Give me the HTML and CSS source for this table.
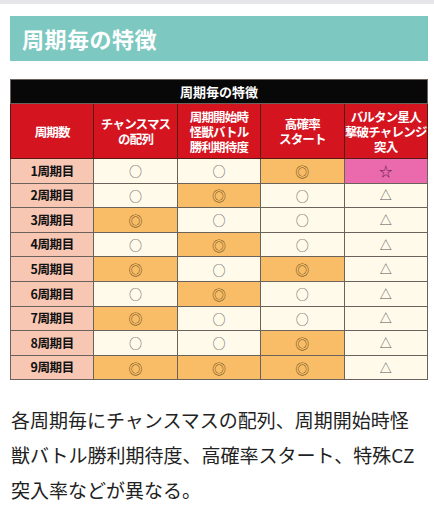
FILE: index.html
```html
<!DOCTYPE html>
<html lang="ja">
  <head>
    <meta charset="UTF-8" />
    <meta name="viewport" content="width=device-width, initial-scale=1.0" />
    <title>周期毎の特徴</title>
    <link rel="stylesheet" href="styles.css">
  </head>

  <body>
    <div class="top-line"></div>

    <h2 class="section-title">周期毎の特徴</h2>

    <table class="cycle-table">
      <tr>
        <th class="caption" colspan="5">周期毎の特徴</th>
      </tr>
      <tr class="head">
        <th class="c-num">周期数</th>
        <th class="c-col">チャンスマス<br>の配列</th>
        <th class="c-col">周期開始時<br>怪獣バトル<br>勝利期待度</th>
        <th class="c-col">高確率<br>スタート</th>
        <th class="c-col">バルタン星人<br>撃破チャレンジ<br>突入</th>
      </tr>
      <tr>
        <td class="label">1周期目</td>
        <td class="cream maru">○</td>
        <td class="cream maru">○</td>
        <td class="orange nijyu">◎</td>
        <td class="pink star">☆</td>
      </tr>
      <tr>
        <td class="label">2周期目</td>
        <td class="cream maru">○</td>
        <td class="orange nijyu">◎</td>
        <td class="cream maru">○</td>
        <td class="cream tri">△</td>
      </tr>
      <tr>
        <td class="label">3周期目</td>
        <td class="orange nijyu">◎</td>
        <td class="cream maru">○</td>
        <td class="cream maru">○</td>
        <td class="cream tri">△</td>
      </tr>
      <tr>
        <td class="label">4周期目</td>
        <td class="cream maru">○</td>
        <td class="orange nijyu">◎</td>
        <td class="cream maru">○</td>
        <td class="cream tri">△</td>
      </tr>
      <tr>
        <td class="label">5周期目</td>
        <td class="orange nijyu">◎</td>
        <td class="cream maru">○</td>
        <td class="orange nijyu">◎</td>
        <td class="cream tri">△</td>
      </tr>
      <tr>
        <td class="label">6周期目</td>
        <td class="cream maru">○</td>
        <td class="orange nijyu">◎</td>
        <td class="cream maru">○</td>
        <td class="cream tri">△</td>
      </tr>
      <tr>
        <td class="label">7周期目</td>
        <td class="orange nijyu">◎</td>
        <td class="cream maru">○</td>
        <td class="cream maru">○</td>
        <td class="cream tri">△</td>
      </tr>
      <tr>
        <td class="label">8周期目</td>
        <td class="cream maru">○</td>
        <td class="cream maru">○</td>
        <td class="orange nijyu">◎</td>
        <td class="cream tri">△</td>
      </tr>
      <tr>
        <td class="label">9周期目</td>
        <td class="orange nijyu">◎</td>
        <td class="orange nijyu">◎</td>
        <td class="orange nijyu">◎</td>
        <td class="cream tri">△</td>
      </tr>
    </table>

    <p class="note">各周期毎にチャンスマスの配列、周期開始時怪獣バトル勝利期待度、高確率スタート、特殊CZ突入率などが異なる。</p>
  </body>
</html>
```

FILE: styles.css
```css
/* General Reset */
* {
  margin: 0;
  padding: 0;
  box-sizing: border-box;
}

body {
  background: #ffffff;
  color: #222222;
  font-family: "Noto Sans CJK JP", "Noto Sans", sans-serif;
}

.top-line {
  height: 4px;
  background: #e6e5ea;
}

.section-title {
  margin: 12px 6px 0 10px;
  height: 45px;
  padding: 0 12px;
  background: #7dc8c0;
  color: #ffffff;
  font-size: 22px;
  font-weight: 700;
  line-height: 45px;
  letter-spacing: 0.5px;
}

/* Table */
.cycle-table {
  margin: 18px 0 0 10px;
  width: 418px;
  border-collapse: collapse;
  table-layout: fixed;
  border: 1px solid #3a3330;
}

.cycle-table th,
.cycle-table td {
  border: 1px solid #6c625c;
  text-align: center;
  vertical-align: middle;
  padding: 0;
  white-space: nowrap;
}

.caption {
  height: 24px;
  background: #080808;
  color: #ffffff;
  font-size: 13px;
  font-weight: 700;
}

.head th {
  height: 55px;
  background: #d4141f;
  color: #ffffff;
  font-size: 12.5px;
  font-weight: 700;
  line-height: 15px;
  letter-spacing: -0.8px;
  border-color: #5a1a14;
}

.c-num {
  width: 51px;
}

.c-col {
  width: 92px;
}

.cycle-table td {
  height: 24.6px;
  font-size: 13px;
  line-height: 1;
}

.label {
  background: #f7c7b4;
  color: #111111;
  font-size: 12.5px !important;
  font-weight: 700;
  letter-spacing: -0.4px;
}

.cream {
  background: #fffaea;
}

.orange {
  background: #f8bd66;
}

.pink {
  background: #ea6aad;
}

.maru {
  color: #5e5e5e;
}

.nijyu {
  color: #6b4a1c;
  font-size: 14px !important;
}

.tri {
  color: #555555;
  font-size: 12px !important;
}

.star {
  color: #5e1a4c;
  font-size: 13px !important;
}

/* Note text */
.note {
  margin: 22px 11px 0 11px;
  font-size: 19px;
  line-height: 35px;
  color: #222222;
}
```
